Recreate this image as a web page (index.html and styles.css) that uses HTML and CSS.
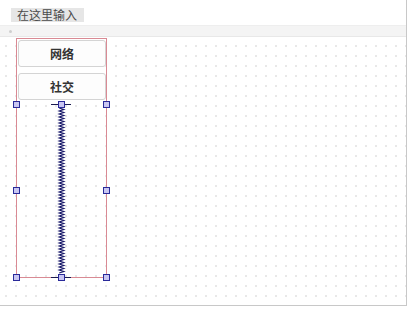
FILE: index.html
```html
<!DOCTYPE html>
<html lang="zh-CN">
<head>
	<meta charset="UTF-8">
	<title>窗体设计</title>
	<link rel="stylesheet" href="styles.css">
</head>
<body>
	<div class="window">
		<div class="menu-bar">
			<span class="menu-item">在这里输入</span>
		</div>
		<div class="tool-band"><span class="band-dot"></span></div>
		<div class="canvas">
			<div class="layout-box">
				<button class="push-btn">网络</button>
				<button class="push-btn">社交</button>
				<svg class="overlay" width="91" height="240" viewBox="0 0 91 240">
					<!-- 弹簧 -->
					<line x1="35" y1="66.5" x2="55" y2="66.5" stroke="#1a1a50" stroke-width="1"/>
					<line x1="35" y1="239.5" x2="55" y2="239.5" stroke="#1a1a50" stroke-width="1"/>
					<polyline id="spring" fill="none" stroke="#1a1a6a" stroke-width="1.2" points=""/>
					<!-- 选择手柄 -->
					<g class="handles">
						<rect x="-2.5" y="63.5" width="6" height="6"/>
						<rect x="42.5" y="63.5" width="6" height="6"/>
						<rect x="87.5" y="63.5" width="6" height="6"/>
						<rect x="-2.5" y="149.5" width="6" height="6"/>
						<rect x="87.5" y="149.5" width="6" height="6"/>
						<rect x="-2.5" y="236.5" width="6" height="6"/>
						<rect x="42.5" y="236.5" width="6" height="6"/>
						<rect x="87.5" y="236.5" width="6" height="6"/>
					</g>
				</svg>
			</div>
		</div>
	</div>

	<script>
		// 画锯齿状的垂直弹簧
		const spring = document.getElementById('spring');
		const pts = [];
		let side = 0;
		for (let y = 70; y <= 236; y += 1.5) {
			pts.push((side ? 47.8 : 43.2) + ',' + y);
			side = 1 - side;
		}
		spring.setAttribute('points', pts.join(' '));
	</script>
</body>
</html>
```

FILE: styles.css
```css
* {
	margin: 0;
	padding: 0;
	box-sizing: border-box;
}

body {
	background: #fff;
	font-family: 'Noto Sans CJK SC', 'Noto Sans', sans-serif;
	color: #333;
}

.window {
	width: 407px;
	height: 306px;
	border-right: 1px solid #c8c8c8;
	border-bottom: 1px solid #c8c8c8;
	display: flex;
	flex-direction: column;
	overflow: hidden;
}

.menu-bar {
	height: 25px;
	padding: 8px 0 0 11px;
	background: #fff;
	display: flex;
	align-items: flex-start;
}

.menu-item {
	height: 14px;
	line-height: 14px;
	padding: 0 7px 0 6px;
	background: #e6e6e6;
	color: #4a4a4a;
	font-size: 12px;
}

.tool-band {
	height: 12px;
	background: #f4f4f4;
	border-top: 1px solid #eeeeee;
	border-bottom: 1px solid #e8e8e8;
	padding: 4px 0 0 9px;
}

.band-dot {
	display: block;
	width: 3px;
	height: 3px;
	border-radius: 50%;
	background: #cfcfcf;
}

.canvas {
	flex: 1;
	padding: 1px 0 0 16px;
	background-color: #fff;
	background-image: radial-gradient(circle, #e0e0e0 0.6px, transparent 1px);
	background-size: 10px 10px;
	background-position: 1px 4px;
}

.layout-box {
	position: relative;
	width: 91px;
	height: 240px;
	border: 1px solid #d98a94;
	padding: 1px 0 0 1px;
	display: flex;
	flex-direction: column;
	gap: 6px;
}

.push-btn {
	width: 88px;
	height: 27px;
	border: 1px solid #d4d4d4;
	border-radius: 3px;
	background: #fdfdfd;
	font-family: 'Noto Sans CJK SC', sans-serif;
	font-size: 12px;
	font-weight: bold;
	color: #333;
}

.overlay {
	position: absolute;
	left: -1px;
	top: -1px;
	overflow: visible;
}

.handles rect {
	fill: #c9c6f2;
	stroke: #2a2a9a;
	stroke-width: 1;
}
```
